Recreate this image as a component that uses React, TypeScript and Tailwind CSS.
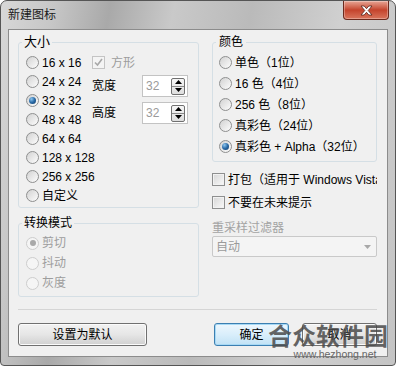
import React from "react";

const sizes = ["16 x 16", "24 x 24", "32 x 32", "48 x 48", "64 x 64", "128 x 128", "256 x 256", "自定义"];
const colors = ["单色（1位）", "16 色（4位）", "256 色（8位）", "真彩色（24位）", "真彩色 + Alpha（32位）"];

function Radio({ label, checked, disabled }: { label: string; checked?: boolean; disabled?: boolean }) {
  return (
    <div className="flex items-center gap-[3px] h-full whitespace-nowrap">
      <span
        className={
          disabled
            ? "w-[13px] h-[13px] shrink-0 rounded-full border border-[#cdcdcd] bg-[#f5f5f5] flex items-center justify-center"
            : "w-[13px] h-[13px] shrink-0 rounded-full border border-[#8e8f8f] bg-linear-to-br from-[#d2d2d2] to-[#fdfdfd] flex items-center justify-center"
        }
      >
        {checked && (
          <span
            className={
              disabled
                ? "w-[6px] h-[6px] rounded-full bg-[#a9a9a9]"
                : "w-[7px] h-[7px] rounded-full bg-radial-[at_35%_30%] from-[#8cc6f0] via-[#2a6aa6] to-[#0f3a66]"
            }
          />
        )}
      </span>
      <span className={disabled ? "text-[#9d9d9d]" : "text-[#000]"}>{label}</span>
    </div>
  );
}

function Check({ label, checked, disabled, wide }: { label: string; checked?: boolean; disabled?: boolean; wide?: boolean }) {
  return (
    <div className={wide ? "flex items-center gap-[6px] h-full" : "flex items-center gap-[3px] h-full whitespace-nowrap"}>
      <span
        className={
          disabled
            ? "w-[13px] h-[13px] shrink-0 border border-[#c4c4c4] bg-[#f4f4f4] flex items-center justify-center"
            : "w-[13px] h-[13px] shrink-0 border border-[#8e8f8f] bg-linear-to-br from-[#d6d6d6] to-[#fafafa] shadow-[inset_0_0_0_1px_#f2f2f2] flex items-center justify-center"
        }
      >
        {checked && (
          <svg width="9" height="9" viewBox="0 0 9 9">
            <path d="M1 4.5 3.5 7 8 1" fill="none" stroke={disabled ? "#a8a8a8" : "#222"} strokeWidth="1.6" />
          </svg>
        )}
      </span>
      <span className={disabled ? "text-[#9d9d9d]" : "text-[#000]"}>{label}</span>
    </div>
  );
}

function Spin() {
  return (
    <div className="w-[46px] h-[22px] border border-[#c3c3c3] bg-white flex items-center justify-between pl-[3px] pr-[2px]">
      <span className="text-[#9a9a9a]">32</span>
      <div className="w-[14px] h-[17px] border border-[#707070] rounded-[2px] bg-linear-to-b from-[#f6f6f6] to-[#dedede] flex flex-col">
        <div className="flex-1 flex items-center justify-center border-b border-[#8a8a8a]">
          <svg width="7" height="4" viewBox="0 0 7 4">
            <path d="M0 4 3.5 0 7 4z" fill="#000" />
          </svg>
        </div>
        <div className="flex-1 flex items-center justify-center">
          <svg width="7" height="4" viewBox="0 0 7 4">
            <path d="M0 0h7L3.5 4z" fill="#000" />
          </svg>
        </div>
      </div>
    </div>
  );
}

function Button({ label, primary, className }: { label: string; primary?: boolean; className: string }) {
  return (
    <div
      className={
        primary
          ? `${className} h-[23px] rounded-[3px] border border-[#3c7fb1] bg-linear-to-b from-[#eef7fd] via-[#d9eefb] to-[#c1e2f5] shadow-[inset_0_0_0_1px_#a7d9f5] flex items-center justify-center`
          : `${className} h-[23px] rounded-[3px] border border-[#707070] bg-linear-to-b from-[#f2f2f2] via-[#e6e6e6] to-[#d0d0d0] shadow-[inset_0_0_0_1px_#fbfbfb] flex items-center justify-center`
      }
    >
      {label}
    </div>
  );
}

export default function App() {
  return (
    <div className="relative w-[396px] h-[366px] text-[12px] leading-[16px] font-['Liberation_Sans','Noto_Sans_CJK_SC',sans-serif]">
      <div className="w-full h-full flex flex-col rounded-t-[7px] rounded-b-[4px] border border-[#555] bg-[linear-gradient(100deg,#d8d8d8_0%,#c6c6c6_12%,#a9a9a9_24%,#c9c9c9_38%,#bababa_55%,#d0d0d0_75%,#c4c4c4_100%)] px-[7px] pb-[8px]">
        {/* title bar */}
        <div className="h-[28px] shrink-0 flex items-start justify-between">
          <span className="mt-[7px] text-[12px] leading-[14px] text-[#1b1b1b]">新建图标</span>
          <div className="-mr-[1px] w-[46px] h-[19px] rounded-b-[4px] border border-t-0 border-[#6b2a1e] bg-linear-to-b from-[#e6a595] via-[#c4432c] to-[#d9745c] shadow-[inset_0_0_0_1px_rgba(255,255,255,0.3)] flex items-center justify-center">
            <svg width="13" height="11" viewBox="0 0 13 11">
              <path
                d="M1 1h3.2l2.3 2.7L8.8 1H12L8.2 5.5 12 10H8.8L6.5 7.3 4.2 10H1l3.8-4.5z"
                fill="#fff"
                stroke="#55231a"
                strokeWidth="0.8"
                strokeLinejoin="round"
              />
            </svg>
          </div>
        </div>

        {/* client area */}
        <div className="flex-1 border border-[#8c8c8c] bg-[#f0f0f0] pt-[4px] pl-[9px] pr-[10px]">
          <div className="flex gap-[13px]">
            {/* left column */}
            <div className="w-[181px] flex flex-col gap-[7px]">
              <fieldset className="h-[174px] border border-[#d5dfe5] rounded-[3px] px-[3px] m-0">
                <legend className="px-[2px] leading-[16px] text-[13px]">大小</legend>
                <div className="flex pt-[3px] pl-[4px]">
                  <div className="w-[66px] shrink-0 flex flex-col">
                    {sizes.map((s) => (
                      <div key={s} className="h-[19px]">
                        <Radio label={s} checked={s === "32 x 32"} />
                      </div>
                    ))}
                  </div>
                  <div className="flex flex-col">
                    <div className="h-[19px]">
                      <Check label="方形" checked disabled wide />
                    </div>
                    <div className="mt-[3px] h-[22px] flex items-center">
                      <span className="w-[50px]">宽度</span>
                      <Spin />
                    </div>
                    <div className="mt-[5px] h-[22px] flex items-center">
                      <span className="w-[50px]">高度</span>
                      <Spin />
                    </div>
                  </div>
                </div>
              </fieldset>

              <fieldset className="h-[82px] border border-[#d5dfe5] rounded-[3px] px-[3px] m-0">
                <legend className="px-[2px] leading-[16px]">转换模式</legend>
                <div className="flex flex-col pt-[2px] pl-[4px]">
                  <div className="h-[20px]">
                    <Radio label="剪切" checked disabled />
                  </div>
                  <div className="h-[20px]">
                    <Radio label="抖动" disabled />
                  </div>
                  <div className="h-[20px]">
                    <Radio label="灰度" disabled />
                  </div>
                </div>
              </fieldset>
            </div>

            {/* right column */}
            <div className="w-[165px] flex flex-col">
              <fieldset className="h-[128px] border border-[#d5dfe5] rounded-[3px] px-[3px] m-0">
                <legend className="px-[3px] leading-[16px]">颜色</legend>
                <div className="flex flex-col pt-[2px] pl-[3px]">
                  {colors.map((c) => (
                    <div key={c} className="h-[21px]">
                      <Radio label={c} checked={c.includes("Alpha")} />
                    </div>
                  ))}
                </div>
              </fieldset>

              <div className="mt-[6px] h-[23px] overflow-hidden">
                <Check label="打包（适用于 Windows Vista）" />
              </div>
              <div className="h-[23px]">
                <Check label="不要在未来提示" />
              </div>
              <div className="mt-[7px] h-[14px] leading-[14px] text-[#a3a3a3]">重采样过滤器</div>
              <div className="mt-[1px] h-[21px] border border-[#c9c9c9] rounded-[2px] bg-[#f4f4f4] flex items-center justify-between pl-[3px] pr-[5px]">
                <span className="text-[#9a9a9a]">自动</span>
                <svg width="7" height="4" viewBox="0 0 7 4">
                  <path d="M0 0h7L3.5 4z" fill="#a8a8a8" />
                </svg>
              </div>
            </div>
          </div>

          <div className="mt-[12px] border-t border-[#d5d5d5]" />

          <div className="mt-[13px] flex justify-between">
            <Button label="设置为默认" className="w-[129px]" />
            <div className="flex gap-[13px]">
              <Button label="确定" primary className="w-[75px]" />
              <Button label="取消" className="w-[75px]" />
            </div>
          </div>
        </div>
      </div>

      {/* watermark */}
      <div className="absolute left-[268px] top-[322px] flex flex-col items-center pointer-events-none">
        <span className="text-[24px] leading-[26px] font-bold text-[#4a4a4a]/85 font-['Noto_Sans_CJK_SC',sans-serif]">合众软件园</span>
        <span className="text-[10.5px] leading-[12px] text-[#666] ml-[14px] font-['Liberation_Sans',sans-serif]">www.hezhong.net</span>
      </div>
    </div>
  );
}
